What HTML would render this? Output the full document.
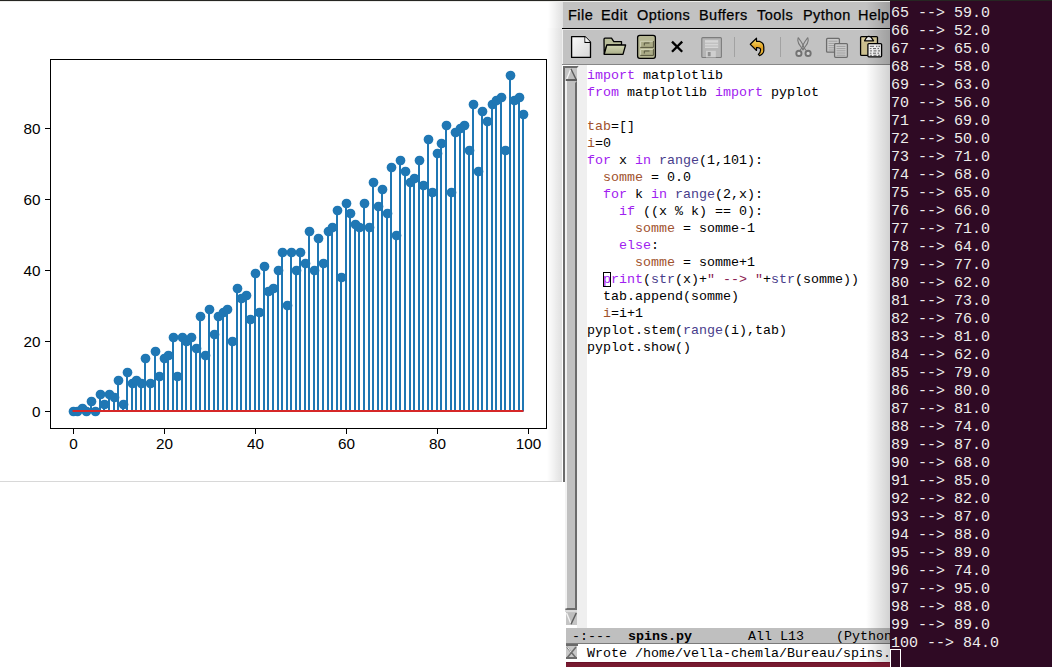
<!DOCTYPE html>
<html><head><meta charset="utf-8"><style>
*{margin:0;padding:0;box-sizing:border-box}
html,body{width:1052px;height:667px;overflow:hidden;background:#fff;position:relative}
.a{position:absolute}
.ln{position:absolute;left:587px;height:17px;line-height:17px;white-space:pre;font-family:"Liberation Mono",monospace;font-size:13.33px;color:#000}
.cur{outline:1px solid #000;outline-offset:-1px}
.tl{position:absolute;left:891px;height:18px;line-height:18px;white-space:pre;font-family:"Liberation Mono",monospace;font-size:15px;color:#eeeeec}
.menu{position:absolute;top:5px;height:20px;line-height:20px;font-family:"Liberation Sans",sans-serif;font-size:14.5px;letter-spacing:0.45px;color:#000;-webkit-text-stroke:0.25px #000}
</style></head><body>
<svg width="640" height="480" viewBox="0 0 640 480" style="position:absolute;left:-30px;top:1px">
<g fill="#1f77b4"><rect x="111" y="406.86" width="2" height="3.54"/><rect x="120" y="399.79" width="2" height="10.61"/><rect x="129" y="392.72" width="2" height="17.68"/><rect x="133" y="403.33" width="2" height="7.07"/><rect x="138" y="392.72" width="2" height="17.68"/><rect x="143" y="396.25" width="2" height="14.15"/><rect x="147" y="378.57" width="2" height="31.83"/><rect x="152" y="403.33" width="2" height="7.07"/><rect x="156" y="371.49" width="2" height="38.91"/><rect x="161" y="382.11" width="2" height="28.29"/><rect x="165" y="378.57" width="2" height="31.83"/><rect x="170" y="382.11" width="2" height="28.29"/><rect x="174" y="357.35" width="2" height="53.05"/><rect x="179" y="382.11" width="2" height="28.29"/><rect x="184" y="350.27" width="2" height="60.13"/><rect x="188" y="375.03" width="2" height="35.37"/><rect x="193" y="357.35" width="2" height="53.05"/><rect x="197" y="353.81" width="2" height="56.59"/><rect x="202" y="336.13" width="2" height="74.27"/><rect x="206" y="375.03" width="2" height="35.37"/><rect x="211" y="336.13" width="2" height="74.27"/><rect x="215" y="339.66" width="2" height="70.74"/><rect x="220" y="336.13" width="2" height="74.27"/><rect x="225" y="346.74" width="2" height="63.66"/><rect x="229" y="314.91" width="2" height="95.49"/><rect x="234" y="353.81" width="2" height="56.59"/><rect x="238" y="307.83" width="2" height="102.57"/><rect x="243" y="332.59" width="2" height="77.81"/><rect x="247" y="314.91" width="2" height="95.49"/><rect x="252" y="311.37" width="2" height="99.03"/><rect x="256" y="307.83" width="2" height="102.57"/><rect x="261" y="339.66" width="2" height="70.74"/><rect x="266" y="286.61" width="2" height="123.79"/><rect x="270" y="297.22" width="2" height="113.18"/><rect x="275" y="293.68" width="2" height="116.72"/><rect x="279" y="318.44" width="2" height="91.96"/><rect x="284" y="272.46" width="2" height="137.94"/><rect x="288" y="311.37" width="2" height="99.03"/><rect x="293" y="265.39" width="2" height="145.01"/><rect x="297" y="290.15" width="2" height="120.25"/><rect x="302" y="286.61" width="2" height="123.79"/><rect x="307" y="268.93" width="2" height="141.47"/><rect x="311" y="251.24" width="2" height="159.16"/><rect x="316" y="304.29" width="2" height="106.11"/><rect x="320" y="251.24" width="2" height="159.16"/><rect x="325" y="268.93" width="2" height="141.47"/><rect x="329" y="251.24" width="2" height="159.16"/><rect x="334" y="261.85" width="2" height="148.55"/><rect x="338" y="230.02" width="2" height="180.38"/><rect x="343" y="268.93" width="2" height="141.47"/><rect x="347" y="237.09" width="2" height="173.31"/><rect x="352" y="261.85" width="2" height="148.55"/><rect x="357" y="230.02" width="2" height="180.38"/><rect x="361" y="226.48" width="2" height="183.92"/><rect x="366" y="208.80" width="2" height="201.60"/><rect x="370" y="276.00" width="2" height="134.40"/><rect x="375" y="201.73" width="2" height="208.67"/><rect x="379" y="212.34" width="2" height="198.06"/><rect x="384" y="222.95" width="2" height="187.45"/><rect x="388" y="226.48" width="2" height="183.92"/><rect x="393" y="201.73" width="2" height="208.67"/><rect x="398" y="226.48" width="2" height="183.92"/><rect x="402" y="180.51" width="2" height="229.89"/><rect x="407" y="205.26" width="2" height="205.14"/><rect x="411" y="187.58" width="2" height="222.82"/><rect x="416" y="212.34" width="2" height="198.06"/><rect x="420" y="166.36" width="2" height="244.04"/><rect x="425" y="233.56" width="2" height="176.84"/><rect x="429" y="159.28" width="2" height="251.12"/><rect x="434" y="169.89" width="2" height="240.51"/><rect x="439" y="180.51" width="2" height="229.89"/><rect x="443" y="176.97" width="2" height="233.43"/><rect x="448" y="159.28" width="2" height="251.12"/><rect x="452" y="184.04" width="2" height="226.36"/><rect x="457" y="138.06" width="2" height="272.34"/><rect x="461" y="191.12" width="2" height="219.28"/><rect x="466" y="152.21" width="2" height="258.19"/><rect x="470" y="141.60" width="2" height="268.80"/><rect x="475" y="123.92" width="2" height="286.48"/><rect x="480" y="191.12" width="2" height="219.28"/><rect x="484" y="130.99" width="2" height="279.41"/><rect x="489" y="127.45" width="2" height="282.95"/><rect x="493" y="123.92" width="2" height="286.48"/><rect x="498" y="148.67" width="2" height="261.73"/><rect x="502" y="102.69" width="2" height="307.71"/><rect x="507" y="169.89" width="2" height="240.51"/><rect x="511" y="109.77" width="2" height="300.63"/><rect x="516" y="120.38" width="2" height="290.02"/><rect x="521" y="102.69" width="2" height="307.71"/><rect x="525" y="99.16" width="2" height="311.24"/><rect x="530" y="95.62" width="2" height="314.78"/><rect x="534" y="148.67" width="2" height="261.73"/><rect x="539" y="74.40" width="2" height="336.00"/><rect x="543" y="99.16" width="2" height="311.24"/><rect x="548" y="95.62" width="2" height="314.78"/><rect x="552" y="113.31" width="2" height="297.09"/></g>
<g fill="#1f77b4"><circle cx="103.50" cy="410.50" r="4.86"/><circle cx="107.50" cy="410.50" r="4.86"/><circle cx="112.50" cy="407.50" r="4.86"/><circle cx="116.50" cy="410.50" r="4.86"/><circle cx="121.50" cy="400.50" r="4.86"/><circle cx="125.50" cy="410.50" r="4.86"/><circle cx="130.50" cy="393.50" r="4.86"/><circle cx="134.50" cy="403.50" r="4.86"/><circle cx="139.50" cy="393.50" r="4.86"/><circle cx="144.50" cy="396.50" r="4.86"/><circle cx="148.50" cy="379.50" r="4.86"/><circle cx="153.50" cy="403.50" r="4.86"/><circle cx="157.50" cy="371.50" r="4.86"/><circle cx="162.50" cy="382.50" r="4.86"/><circle cx="166.50" cy="379.50" r="4.86"/><circle cx="171.50" cy="382.50" r="4.86"/><circle cx="175.50" cy="357.50" r="4.86"/><circle cx="180.50" cy="382.50" r="4.86"/><circle cx="185.50" cy="350.50" r="4.86"/><circle cx="189.50" cy="375.50" r="4.86"/><circle cx="194.50" cy="357.50" r="4.86"/><circle cx="198.50" cy="354.50" r="4.86"/><circle cx="203.50" cy="336.50" r="4.86"/><circle cx="207.50" cy="375.50" r="4.86"/><circle cx="212.50" cy="336.50" r="4.86"/><circle cx="216.50" cy="340.50" r="4.86"/><circle cx="221.50" cy="336.50" r="4.86"/><circle cx="226.50" cy="347.50" r="4.86"/><circle cx="230.50" cy="315.50" r="4.86"/><circle cx="235.50" cy="354.50" r="4.86"/><circle cx="239.50" cy="308.50" r="4.86"/><circle cx="244.50" cy="333.50" r="4.86"/><circle cx="248.50" cy="315.50" r="4.86"/><circle cx="253.50" cy="311.50" r="4.86"/><circle cx="257.50" cy="308.50" r="4.86"/><circle cx="262.50" cy="340.50" r="4.86"/><circle cx="267.50" cy="287.50" r="4.86"/><circle cx="271.50" cy="297.50" r="4.86"/><circle cx="276.50" cy="294.50" r="4.86"/><circle cx="280.50" cy="318.50" r="4.86"/><circle cx="285.50" cy="272.50" r="4.86"/><circle cx="289.50" cy="311.50" r="4.86"/><circle cx="294.50" cy="265.50" r="4.86"/><circle cx="298.50" cy="290.50" r="4.86"/><circle cx="303.50" cy="287.50" r="4.86"/><circle cx="308.50" cy="269.50" r="4.86"/><circle cx="312.50" cy="251.50" r="4.86"/><circle cx="317.50" cy="304.50" r="4.86"/><circle cx="321.50" cy="251.50" r="4.86"/><circle cx="326.50" cy="269.50" r="4.86"/><circle cx="330.50" cy="251.50" r="4.86"/><circle cx="335.50" cy="262.50" r="4.86"/><circle cx="339.50" cy="230.50" r="4.86"/><circle cx="344.50" cy="269.50" r="4.86"/><circle cx="348.50" cy="237.50" r="4.86"/><circle cx="353.50" cy="262.50" r="4.86"/><circle cx="358.50" cy="230.50" r="4.86"/><circle cx="362.50" cy="226.50" r="4.86"/><circle cx="367.50" cy="209.50" r="4.86"/><circle cx="371.50" cy="276.50" r="4.86"/><circle cx="376.50" cy="202.50" r="4.86"/><circle cx="380.50" cy="212.50" r="4.86"/><circle cx="385.50" cy="223.50" r="4.86"/><circle cx="389.50" cy="226.50" r="4.86"/><circle cx="394.50" cy="202.50" r="4.86"/><circle cx="399.50" cy="226.50" r="4.86"/><circle cx="403.50" cy="181.50" r="4.86"/><circle cx="408.50" cy="205.50" r="4.86"/><circle cx="412.50" cy="188.50" r="4.86"/><circle cx="417.50" cy="212.50" r="4.86"/><circle cx="421.50" cy="166.50" r="4.86"/><circle cx="426.50" cy="234.50" r="4.86"/><circle cx="430.50" cy="159.50" r="4.86"/><circle cx="435.50" cy="170.50" r="4.86"/><circle cx="440.50" cy="181.50" r="4.86"/><circle cx="444.50" cy="177.50" r="4.86"/><circle cx="449.50" cy="159.50" r="4.86"/><circle cx="453.50" cy="184.50" r="4.86"/><circle cx="458.50" cy="138.50" r="4.86"/><circle cx="462.50" cy="191.50" r="4.86"/><circle cx="467.50" cy="152.50" r="4.86"/><circle cx="471.50" cy="142.50" r="4.86"/><circle cx="476.50" cy="124.50" r="4.86"/><circle cx="481.50" cy="191.50" r="4.86"/><circle cx="485.50" cy="131.50" r="4.86"/><circle cx="490.50" cy="127.50" r="4.86"/><circle cx="494.50" cy="124.50" r="4.86"/><circle cx="499.50" cy="149.50" r="4.86"/><circle cx="503.50" cy="103.50" r="4.86"/><circle cx="508.50" cy="170.50" r="4.86"/><circle cx="512.50" cy="110.50" r="4.86"/><circle cx="517.50" cy="120.50" r="4.86"/><circle cx="522.50" cy="103.50" r="4.86"/><circle cx="526.50" cy="99.50" r="4.86"/><circle cx="531.50" cy="96.50" r="4.86"/><circle cx="535.50" cy="149.50" r="4.86"/><circle cx="540.50" cy="74.50" r="4.86"/><circle cx="544.50" cy="99.50" r="4.86"/><circle cx="549.50" cy="96.50" r="4.86"/><circle cx="553.50" cy="113.50" r="4.86"/></g>
<rect x="102.55" y="409" width="450.91" height="2" fill="#d62728"/>
<g fill="#000">
<rect x="80" y="58" width="497" height="1"/>
<rect x="80" y="427" width="497" height="1"/>
<rect x="80" y="58" width="1" height="370"/>
<rect x="576" y="58" width="1" height="370"/>
<rect x="103" y="428" width="1" height="5"/><rect x="194" y="428" width="1" height="5"/><rect x="285" y="428" width="1" height="5"/><rect x="376" y="428" width="1" height="5"/><rect x="467" y="428" width="1" height="5"/><rect x="558" y="428" width="1" height="5"/><rect x="75" y="410" width="5" height="1"/><rect x="75" y="340" width="5" height="1"/><rect x="75" y="269" width="5" height="1"/><rect x="75" y="198" width="5" height="1"/><rect x="75" y="127" width="5" height="1"/></g><g font-family="Liberation Sans" font-size="13.9" fill="#000"><text transform="translate(103.5,448) scale(1.1,1)" text-anchor="middle">0</text><text transform="translate(194.5,448) scale(1.1,1)" text-anchor="middle">20</text><text transform="translate(285.5,448) scale(1.1,1)" text-anchor="middle">40</text><text transform="translate(376.5,448) scale(1.1,1)" text-anchor="middle">60</text><text transform="translate(467.5,448) scale(1.1,1)" text-anchor="middle">80</text><text transform="translate(558.5,448) scale(1.1,1)" text-anchor="middle">100</text><text transform="translate(70.5,415.5) scale(1.1,1)" text-anchor="end">0</text><text transform="translate(70.5,345.5) scale(1.1,1)" text-anchor="end">20</text><text transform="translate(70.5,274.5) scale(1.1,1)" text-anchor="end">40</text><text transform="translate(70.5,203.5) scale(1.1,1)" text-anchor="end">60</text><text transform="translate(70.5,132.5) scale(1.1,1)" text-anchor="end">80</text></g></svg>
<div class="a" style="left:0;top:481px;width:562px;height:1px;background:#d8d8d8"></div>
<div class="a" style="left:548px;top:2px;width:15px;height:26px;background:linear-gradient(to right,rgba(0,0,0,0),rgba(0,0,0,0.12))"></div>
<div class="a" style="left:547px;top:28px;width:15px;height:453px;background:linear-gradient(to right,rgba(0,0,0,0),rgba(0,0,0,0.12))"></div>
<!-- emacs -->
<div class="a" style="left:563px;top:2px;width:327px;height:26px;background:#c2c2c2"></div>
<div class="menu" style="left:568px">File</div>
<div class="menu" style="left:601px">Edit</div>
<div class="menu" style="left:637px">Options</div>
<div class="menu" style="left:699px">Buffers</div>
<div class="menu" style="left:757px">Tools</div>
<div class="menu" style="left:803px">Python</div>
<div class="menu" style="left:858px">Help</div>
<div class="a" style="left:562px;top:28px;width:328px;height:1px;background:#000"></div>
<div class="a" style="left:562px;top:29px;width:328px;height:35px;background:#c2c2c2;border-top:1px solid #e4e4e4;border-left:1px solid #f0f0f0"></div>
<div class="a" style="left:562px;top:64px;width:328px;height:1px;background:#888"></div>
<svg class="a" style="left:0;top:0" width="1052" height="70" viewBox="0 0 1052 70">
<defs>
<linearGradient id="gNew" x1="0" y1="0" x2="1" y2="1"><stop offset="0" stop-color="#fafafa"/><stop offset="1" stop-color="#d6d6d6"/></linearGradient>
<linearGradient id="gFold" x1="0" y1="0" x2="0" y2="1"><stop offset="0" stop-color="#d4d8b4"/><stop offset="1" stop-color="#a9ad88"/></linearGradient>
<linearGradient id="gUndo" x1="0" y1="0" x2="0" y2="1"><stop offset="0" stop-color="#f8e070"/><stop offset="0.55" stop-color="#e0a020"/><stop offset="1" stop-color="#f0c040"/></linearGradient>
</defs>
<!-- new -->
<path d="M571.6,36.6 H585 L590.5,42.2 V57.4 H571.6 Z" fill="url(#gNew)" stroke="#000" stroke-width="1.3" stroke-linejoin="round"/>
<path d="M585,36.8 V42.4 H590.3" fill="#fff" stroke="#000" stroke-width="1.1"/>
<path d="M585.4,37.4 L589.8,41.8 H585.4 Z" fill="#f4f4f4"/>
<!-- open folder -->
<path d="M604,39.2 Q604,38.2 605,38.2 H611.5 L613.8,41.6 H621.5 V45.2 H607 L604.2,53.5 Z" fill="#b9bd99" stroke="#000" stroke-width="1.3" stroke-linejoin="round"/>
<path d="M606.8,45 H625.6 L623,54.4 H604.2 Z" fill="url(#gFold)" stroke="#000" stroke-width="1.3" stroke-linejoin="round"/>
<!-- cabinet -->
<rect x="637.6" y="35.4" width="17.8" height="22.9" rx="2.2" fill="#b5b692" stroke="#000" stroke-width="1.3"/>
<path d="M640.3,41 H653.6 V47.6 H640.3 Z" fill="#aaab86"/>
<path d="M640.6,47.2 V41.3 H653" fill="none" stroke="#d6d7bc" stroke-width="0.9"/>
<path d="M653.4,41 V47.4 H640.3" fill="none" stroke="#55553e" stroke-width="1"/>
<path d="M644.3,45.5 V43 H649.5" fill="none" stroke="#55553e" stroke-width="1"/>
<path d="M640.3,49.2 H653.6 V55.6 H640.3 Z" fill="#aaab86"/>
<path d="M640.6,55.2 V49.5 H653" fill="none" stroke="#d6d7bc" stroke-width="0.9"/>
<path d="M653.4,49.2 V55.4 H640.3" fill="none" stroke="#55553e" stroke-width="1"/>
<path d="M644.3,53.5 V51 H649.5" fill="none" stroke="#55553e" stroke-width="1"/>
<!-- x -->
<path d="M672,41.6 L682.2,51.8 M682.2,41.6 L672,51.8" stroke="#000" stroke-width="2.3"/>
<!-- save (disabled) -->
<rect x="701.8" y="37.6" width="19.6" height="19.9" rx="1" fill="#b6b6b6" stroke="#7c7c7c" stroke-width="1.1"/>
<rect x="705" y="40.2" width="13.2" height="7.8" fill="#d6d6d6"/>
<path d="M705,43.2 H718.2 M705,46 H718.2" stroke="#b8b8b8" stroke-width="1"/>
<rect x="706" y="50.8" width="9.8" height="6.6" fill="#cfcfcf"/>
<rect x="707.8" y="52" width="2.8" height="4.2" fill="#8e8e8e"/>
<!-- separators -->
<rect x="734" y="37" width="1" height="20" fill="#a2a2a2"/>
<rect x="780" y="37" width="1" height="20" fill="#a2a2a2"/>
<!-- undo -->
<path d="M750.3,44.3 L756.5,38.2 V41.3 H759.5 Q763.8,42.5 763.8,47 V51 Q763.5,54 759.5,55.6 L758.4,54.4 Q761,52 760.5,49 Q760,47.6 757.5,47.6 L756.5,47.7 V50.5 Z" fill="url(#gUndo)" stroke="#000" stroke-width="1.2" stroke-linejoin="round"/>
<!-- scissors (disabled) -->
<g fill="none" stroke="#767676" stroke-width="1.1">
<path d="M798.2,37.6 L797.8,40.5 Q798,43.5 801,47 L803.6,50.2"/>
<path d="M798.2,37.6 L801,41.5 Q803,44.5 804,47.5 L805.8,50.2"/>
<path d="M807.8,37.6 L808.2,40.5 Q808,43.5 805,47 L802.4,50.2"/>
<path d="M807.8,37.6 L805,41.5 Q803,44.5 802,47.5 L800.2,50.2"/>
</g>
<g fill="#d2d2d2" stroke="#727272" stroke-width="1.9">
<circle cx="798.9" cy="53.4" r="2.6"/>
<circle cx="808.1" cy="53.4" r="2.6"/>
</g>
<!-- copy (disabled) -->
<rect x="826.6" y="38.4" width="12.8" height="13.8" rx="1" fill="#cbcbcb" stroke="#6c6c6c" stroke-width="1.3"/>
<g stroke="#9a9a9a" stroke-width="0.9"><path d="M828.5,41.2 H837.5 M828.5,43.4 H837.5 M828.5,45.6 H837.5 M828.5,47.8 H837.5 M828.5,50 H837.5"/></g>
<rect x="834.6" y="43.6" width="12.8" height="13.7" rx="1" fill="#cbcbcb" stroke="#6c6c6c" stroke-width="1.3"/>
<g stroke="#9a9a9a" stroke-width="0.9"><path d="M836.5,46.4 H845.5 M836.5,48.6 H845.5 M836.5,50.8 H845.5 M836.5,53 H845.5 M836.5,55.2 H845.5"/></g>
<!-- paste -->
<rect x="860.6" y="36.6" width="16.9" height="18.8" rx="1" fill="#d7cb9a" stroke="#000" stroke-width="1.3"/>
<g stroke="#b8ac7c" stroke-width="0.8"><path d="M862,43 H867 M862,45 H867 M862,47 H867 M862,49 H867 M862,51 H867 M862,53 H867"/></g>
<path d="M864.5,40.8 L866.6,37.4 Q868.5,35.2 871.2,37.4 L873.6,40.8 Z" fill="#e8e8e8" stroke="#000" stroke-width="1.2" stroke-linejoin="round"/>
<rect x="867.9" y="43.6" width="13.7" height="13.2" rx="1" fill="#fdfdfd" stroke="#000" stroke-width="1.3"/>
<g stroke="#555" stroke-width="0.9"><path d="M869.8,46.3 H874 M876,46.3 H877.3 M878.5,46.3 H880 M869.8,48.6 H871.5 M873,48.6 H876 M877.5,48.6 H879 M869.8,50.9 H872 M873.5,50.9 H876.5 M878,50.9 H880 M869.8,53.2 H871.5 M873,53.2 H876 M877.5,53.2 H879 M869.8,55.3 H872 M873.5,55.3 H876.5 M878,55.3 H880"/></g>
</svg>
<!-- scrollbar -->
<div class="a" style="left:565px;top:65px;width:325px;height:563px;background:#fff"></div>
<div class="a" style="left:577px;top:65px;width:10px;height:563px;background:#efefef"></div>
<div class="ln" style="top:67px"><span style="color:#a020f0">import</span> matplotlib</div><div class="ln" style="top:84px"><span style="color:#a020f0">from</span> matplotlib <span style="color:#a020f0">import</span> pyplot</div><div class="ln" style="top:101px"></div><div class="ln" style="top:118px"><span style="color:#a0522d">tab</span>=[]</div><div class="ln" style="top:135px"><span style="color:#a0522d">i</span>=0</div><div class="ln" style="top:152px"><span style="color:#a020f0">for</span> x <span style="color:#a020f0">in</span> <span style="color:#483d8b">range</span>(1,101):</div><div class="ln" style="top:169px">  <span style="color:#a0522d">somme</span> = 0.0</div><div class="ln" style="top:186px">  <span style="color:#a020f0">for</span> k <span style="color:#a020f0">in</span> <span style="color:#483d8b">range</span>(2,x):</div><div class="ln" style="top:203px">    <span style="color:#a020f0">if</span> ((x % k) == 0):</div><div class="ln" style="top:220px">      <span style="color:#a0522d">somme</span> = somme-1</div><div class="ln" style="top:237px">    <span style="color:#a020f0">else</span>:</div><div class="ln" style="top:254px">      <span style="color:#a0522d">somme</span> = somme+1</div><div class="ln" style="top:271px">  <span class="cur"><span style="color:#a020f0">p</span></span><span style="color:#a020f0">rint</span>(<span style="color:#483d8b">str</span>(x)+<span style="color:#8b2252">" --> "</span>+<span style="color:#483d8b">str</span>(somme))</div><div class="ln" style="top:288px">  tab.append(somme)</div><div class="ln" style="top:305px">  <span style="color:#a0522d">i</span>=i+1</div><div class="ln" style="top:322px">pyplot.stem(<span style="color:#483d8b">range</span>(i),tab)</div><div class="ln" style="top:339px">pyplot.show()</div>
<!-- modeline -->
<div class="a" style="left:566px;top:628px;width:324px;height:16px;background:#bfbfbf;border-bottom:1px solid #7a7a7a"></div>
<div class="ln" style="left:564px;top:629px;height:16px;line-height:16px"> -:---  <b>spins.py</b>       All L13    (Python)</div>
<div class="a" style="left:566px;top:644px;width:324px;height:18px;background:#fff"></div>
<div class="ln" style="left:587px;top:645px;height:17px;line-height:17px">Wrote /home/vella-chemla/Bureau/spins.py</div>
<div class="a" style="left:566px;top:662px;width:324px;height:5px;background:#771a30;border-top:1px solid #6a1028"></div>
<svg class="a" style="left:0;top:0" width="1052" height="667" viewBox="0 0 1052 667">
<!-- left frame (upper part only) -->
<rect x="563" y="66" width="2" height="416" fill="#6b6b6b"/>
<path d="M563,66 H578.6 L577,68 H563 Z" fill="#6b6b6b"/>
<!-- up arrow box -->
<rect x="565" y="68" width="12" height="13" fill="#c4c4c4"/>
<path d="M570.9,68.6 L576.6,80.6 H566.2 Z" fill="#bdbdbd"/>
<path d="M566.4,80 L570.9,68.8" stroke="#f4f4f4" stroke-width="1.3" fill="none"/>
<path d="M570.9,68.8 L576.2,79.6" stroke="#5e5e5e" stroke-width="1.4" fill="none"/>
<rect x="566" y="79" width="11" height="2" fill="#5e5e5e"/>
<!-- thumb -->
<rect x="565" y="81" width="12" height="529" fill="#c0c0c0"/>
<rect x="565" y="81" width="2" height="527" fill="#f2f2f2"/>
<path d="M575,83 L577,81 V610 H575 Z" fill="#6b6b6b"/>
<path d="M565,610 L567,608 H577 V610 Z" fill="#6b6b6b"/>
<rect x="565" y="610" width="12" height="2" fill="#dadada"/>
<!-- down arrow -->
<rect x="566" y="612" width="11" height="13" fill="#c4c4c4"/>
<path d="M566.4,612.8 H576.4 L571,624.4 Z" fill="#bdbdbd"/>
<path d="M566.6,613 L571,624" stroke="#f4f4f4" stroke-width="1.3" fill="none"/>
<path d="M576.3,613 L571,624.2" stroke="#5e5e5e" stroke-width="1.5" fill="none"/>
<!-- minibuffer scroll thing -->
<rect x="566" y="644" width="12" height="2" fill="#6b6b6b"/>
<rect x="566" y="646" width="11" height="13" fill="#c8c8c8"/>
<path d="M567,647 L576,658 M576,647 L567,658" stroke="#6e6e6e" stroke-width="1.6"/>
<path d="M567.5,647 L571,652" stroke="#f4f4f4" stroke-width="1"/>
<rect x="566" y="657" width="11" height="2" fill="#6b6b6b"/>
</svg>
<div class="a" style="left:866px;top:1px;width:24px;height:661px;background:linear-gradient(to right,rgba(0,0,0,0),rgba(0,0,0,0.18))"></div>
<div class="a" style="left:0;top:1px;width:890px;height:1px;background:#ececea"></div>
<!-- terminal -->
<div class="a" style="left:890px;top:0;width:162px;height:667px;background:#2f0a24;overflow:hidden">
</div>
<div class="tl" style="top:5px">65 --&gt; 59.0</div><div class="tl" style="top:23px">66 --&gt; 52.0</div><div class="tl" style="top:41px">67 --&gt; 65.0</div><div class="tl" style="top:59px">68 --&gt; 58.0</div><div class="tl" style="top:77px">69 --&gt; 63.0</div><div class="tl" style="top:95px">70 --&gt; 56.0</div><div class="tl" style="top:113px">71 --&gt; 69.0</div><div class="tl" style="top:131px">72 --&gt; 50.0</div><div class="tl" style="top:149px">73 --&gt; 71.0</div><div class="tl" style="top:167px">74 --&gt; 68.0</div><div class="tl" style="top:185px">75 --&gt; 65.0</div><div class="tl" style="top:203px">76 --&gt; 66.0</div><div class="tl" style="top:221px">77 --&gt; 71.0</div><div class="tl" style="top:239px">78 --&gt; 64.0</div><div class="tl" style="top:257px">79 --&gt; 77.0</div><div class="tl" style="top:275px">80 --&gt; 62.0</div><div class="tl" style="top:293px">81 --&gt; 73.0</div><div class="tl" style="top:311px">82 --&gt; 76.0</div><div class="tl" style="top:329px">83 --&gt; 81.0</div><div class="tl" style="top:347px">84 --&gt; 62.0</div><div class="tl" style="top:365px">85 --&gt; 79.0</div><div class="tl" style="top:383px">86 --&gt; 80.0</div><div class="tl" style="top:401px">87 --&gt; 81.0</div><div class="tl" style="top:419px">88 --&gt; 74.0</div><div class="tl" style="top:437px">89 --&gt; 87.0</div><div class="tl" style="top:455px">90 --&gt; 68.0</div><div class="tl" style="top:473px">91 --&gt; 85.0</div><div class="tl" style="top:491px">92 --&gt; 82.0</div><div class="tl" style="top:509px">93 --&gt; 87.0</div><div class="tl" style="top:527px">94 --&gt; 88.0</div><div class="tl" style="top:545px">95 --&gt; 89.0</div><div class="tl" style="top:563px">96 --&gt; 74.0</div><div class="tl" style="top:581px">97 --&gt; 95.0</div><div class="tl" style="top:599px">98 --&gt; 88.0</div><div class="tl" style="top:617px">99 --&gt; 89.0</div><div class="tl" style="top:635px">100 --&gt; 84.0</div>
<div class="a" style="left:890px;top:649px;width:11px;height:20px;border:1px solid #fff"></div>
<div class="a" style="left:0;top:0;width:1052px;height:1px;background:#262622"></div>
</body></html>
